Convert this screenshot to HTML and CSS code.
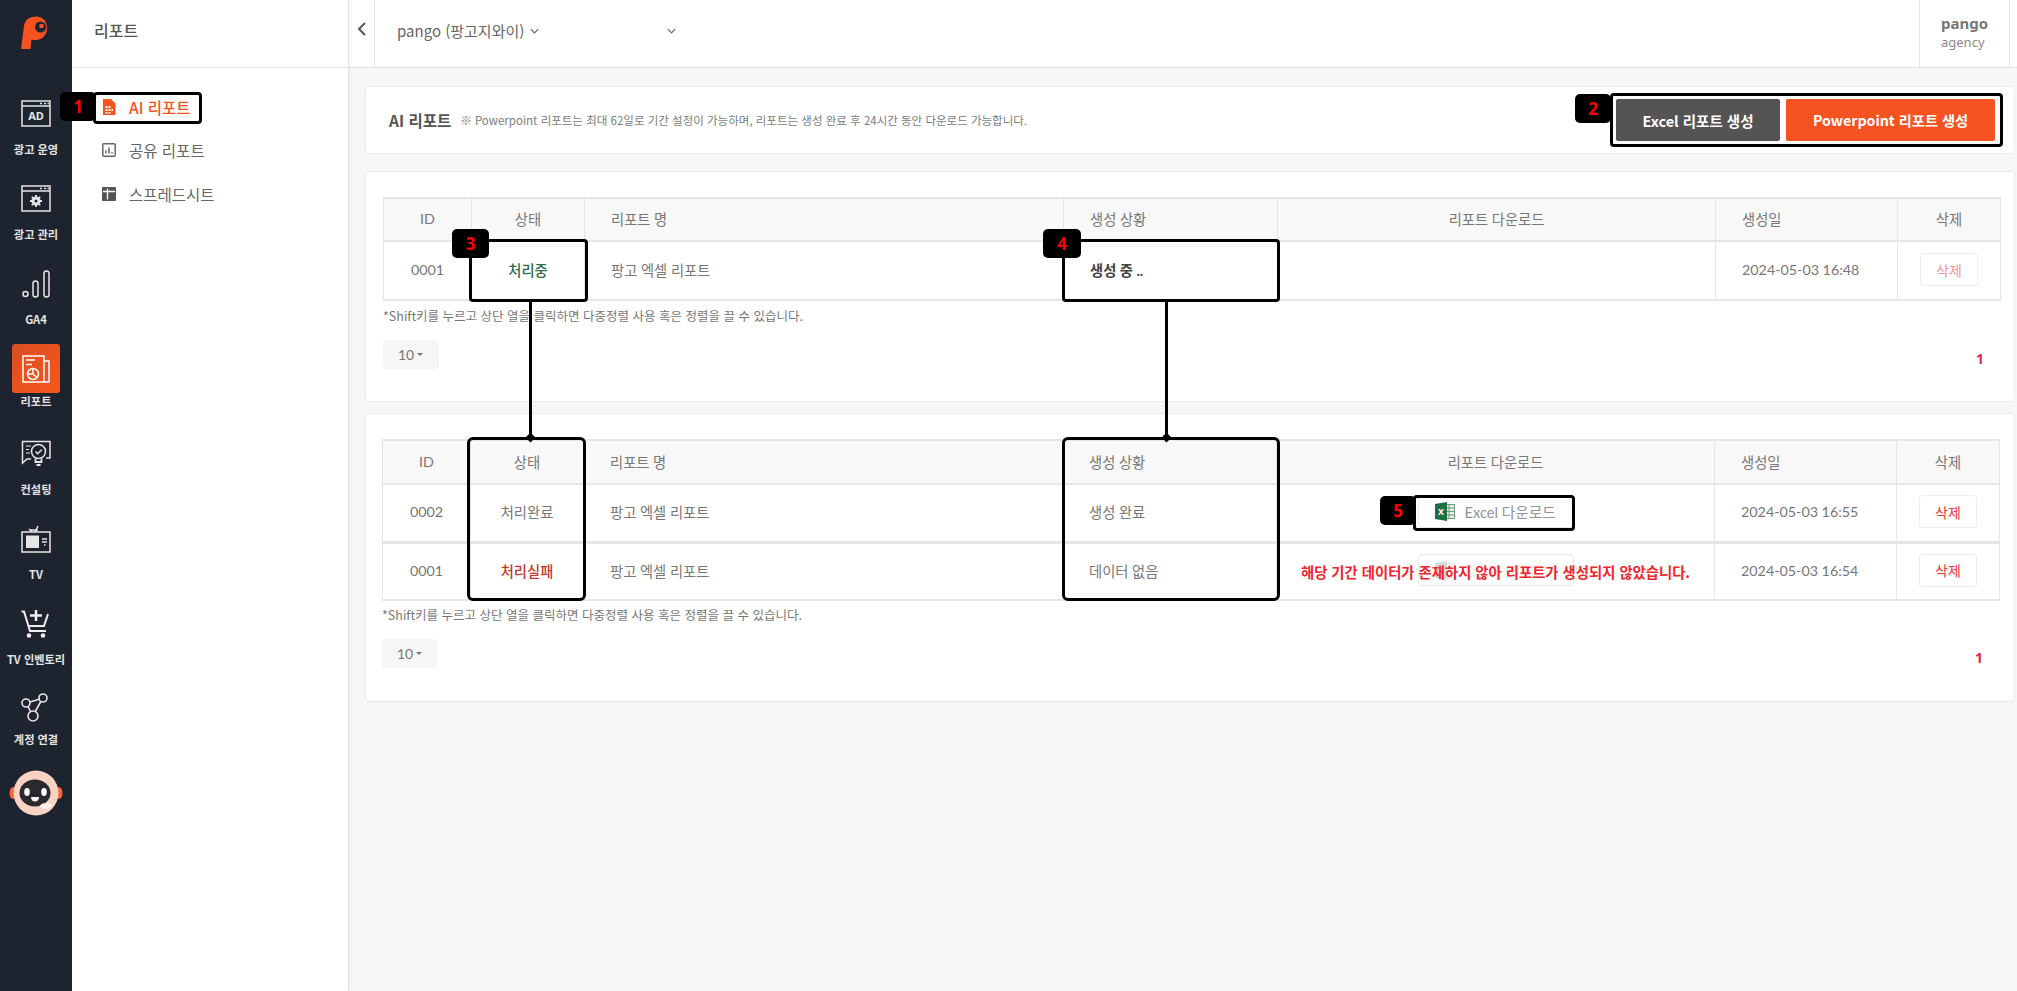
FILE: index.html
```html
<!DOCTYPE html>
<html lang="ko">
<head>
<meta charset="utf-8">
<title>AI 리포트</title>
<link rel="stylesheet" href="styles.css">
</head>
<body>
<div class="app">
  <nav class="rail">
    <svg class="logo" viewBox="0 0 30 36" width="30" height="36"><path fill="#f75321" d="M2 34 L5 11 C6 5 10 1.500 17 1.500 C24 1.500 28 6.500 28 13 C28 20 23 25 17 25 C15 25 13.500 24.800 12.500 24.400 L11.500 34 Z"/><circle cx="21.500" cy="12" r="5.500" fill="#1e2330"/><circle cx="22.500" cy="11" r="2.300" fill="#f75321"/></svg>
    <a class="rail-item"><span class="rail-icon"><svg viewBox="0 0 30 28" width="30" height="28" fill="none" stroke="#e6e6e6" stroke-width="1.500"><rect x="1" y="1" width="28" height="25"/><path d="M1 6h28M19 3.500h2M23 3.500h2M26.500 3.500h1.500"/><text x="15" y="20" class="svg-ad">AD</text></svg></span><span class="rail-label">광고 운영</span></a>
    <a class="rail-item"><span class="rail-icon"><svg viewBox="0 0 30 28" width="30" height="28" fill="none" stroke="#e6e6e6" stroke-width="1.500"><rect x="1" y="1" width="28" height="25"/><path d="M1 6h28M19 3.500h2M23 3.500h2M26.500 3.500h1.500"/><circle cx="15" cy="16" r="3" stroke-width="3"/><path stroke-width="1.800" d="M15 10v2M15 20v2M9 16h2M19 16h2M10.800 11.800l1.400 1.400M17.800 18.800l1.400 1.400M10.800 20.200l1.400-1.400M17.800 13.200l1.400-1.400"/></svg></span><span class="rail-label">광고 관리</span></a>
    <a class="rail-item"><span class="rail-icon"><svg viewBox="0 0 30 28" width="30" height="28" fill="none" stroke="#e6e6e6" stroke-width="1.500"><circle cx="4.500" cy="24" r="2.500"/><rect x="12" y="11" width="5" height="16" rx="2.500"/><rect x="23" y="1" width="5" height="26" rx="2.500"/></svg></span><span class="rail-label">GA4</span></a>
    <a class="rail-item rail-item-active"><span class="rail-active"><svg viewBox="0 0 28 28" width="28" height="28" fill="none" stroke="#fff" stroke-width="1.500"><path d="M1 1h21v26H1z"/><path d="M22 6h5v21h-5"/><path d="M4 5h9M4 9.500h6"/><circle cx="11" cy="19" r="5.500"/><path d="M11 19v-5.500M11 19l4 3.500M11 19H5.500"/></svg></span><span class="rail-label">리포트</span></a>
    <a class="rail-item"><span class="rail-icon"><svg viewBox="0 0 30 28" width="30" height="28" fill="none" stroke="#e6e6e6" stroke-width="1.500"><path d="M10 19H6L1.500 23V1.500H29V18h-4"/><circle cx="17.500" cy="11.500" r="7" fill="#1e2330"/><path d="M14.500 11.500l2.200 2.200 4-4"/><path d="M14.500 18.500v3.500h6v-3.500M15.500 25h4" stroke-width="1.800"/><path d="M5 6h5M5 9.500h3M5 13h4" stroke-width="1.200"/></svg></span><span class="rail-label">컨설팅</span></a>
    <a class="rail-item"><span class="rail-icon"><svg viewBox="0 0 30 28" width="30" height="28" fill="none" stroke="#e6e6e6" stroke-width="1.500"><rect x="1" y="7" width="28" height="20"/><path d="M11 7l-3-3M14 7l3-6M9 5h8"/><rect x="5" y="10.500" width="13" height="12.500" fill="#e6e6e6" stroke="none"/><path d="M21 14h5M21 17h5M23 20h1.500"/></svg></span><span class="rail-label">TV</span></a>
    <a class="rail-item"><span class="rail-icon"><svg viewBox="0 0 30 28" width="30" height="28" fill="none" stroke="#eee" stroke-width="2"><path d="M.5 1.500H3L9 21h16"/><path d="M27 4l-4 12H7"/><circle cx="8" cy="25.500" r="2.300" fill="#eee" stroke="none"/><circle cx="22" cy="25.500" r="2.300" fill="#eee" stroke="none"/><path d="M15 0v11M9 5.500h12" stroke-width="2.500"/></svg></span><span class="rail-label">TV 인벤토리</span></a>
    <a class="rail-item rail-item-link"><span class="rail-icon"><svg viewBox="0 0 30 30" width="30" height="30" fill="none" stroke="#e6e6e6" stroke-width="1.600"><circle cx="22" cy="5" r="4"/><circle cx="5" cy="10" r="4"/><circle cx="12" cy="23" r="5"/><path d="M9 9l9.200-2.800M7 13.500l2.500 5M19.800 8.500l-5.500 10"/></svg></span><span class="rail-label">계정 연결</span></a>
    <svg class="mascot" viewBox="0 0 56 48" width="56" height="48"><ellipse cx="5" cy="24" rx="3.500" ry="6" fill="#f7643a"/><ellipse cx="51" cy="24" rx="3.500" ry="6" fill="#f7643a"/><circle cx="28" cy="24" r="22.500" fill="#f8d3c3"/><ellipse cx="27" cy="24" rx="15.500" ry="13.500" fill="#2a2a2e"/><ellipse cx="19" cy="23" rx="2.800" ry="4" fill="#fff"/><ellipse cx="36" cy="23" rx="2.800" ry="4" fill="#fff"/><path d="M23 28h8c0 3-2 4.500-4 4.500S23 31 23 28z" fill="#fff"/><ellipse cx="38" cy="37" rx="6" ry="3" fill="#fff0ea"/></svg>
  </nav>

  <aside class="side">
    <div class="side-head">리포트</div>
    <ul class="side-menu">
      <li class="side-link side-link-on"><svg viewBox="0 0 14 16" width="14" height="16"><path fill="#f75321" d="M1 0h8l4.500 4.500V16H1z"/><path fill="#fff" d="M3.500 7h2v2h-2zM6.500 7h2v2h-2zM3.500 10h2v2h-2zM6.500 10h2v2h-2zM9.500 10h1.500v2H9.500zM3.500 13h2v1.500h-2zM6.500 13h2v1.500h-2z"/></svg>AI 리포트</li>
      <li class="side-link"><svg viewBox="0 0 14 14" width="14" height="14" fill="none" stroke="#666" stroke-width="1.500"><rect x=".8" y=".8" width="12.400" height="12.400" rx="1"/><path d="M4 10.500V7.500M7 10.500V4.500M10 10.500V9"/></svg>공유 리포트</li>
      <li class="side-link"><svg viewBox="0 0 14 14" width="14" height="14"><rect width="14" height="14" rx="1" fill="#555"/><path d="M1 4.500h12M5.500 1.500v11" stroke="#fff" stroke-width="1.300"/></svg>스프레드시트</li>
    </ul>
  </aside>

  <div class="main">
    <header class="top">
      <button class="back"><svg viewBox="0 0 10 14" width="10" height="14" fill="none" stroke="#555" stroke-width="2"><path d="M8 1L2 7l6 6"/></svg></button>
      <div class="crumb">pango (팡고지와이)<svg class="chev" viewBox="0 0 10 6" width="9" height="6" fill="none" stroke="#666" stroke-width="1.300"><path d="M1 1l4 4 4-4"/></svg><svg class="chev chev-far" viewBox="0 0 10 6" width="9" height="6" fill="none" stroke="#666" stroke-width="1.300"><path d="M1 1l4 4 4-4"/></svg></div>
      <div class="account"><strong>pango</strong><span>agency</span></div>
    </header>

    <section class="card card-title">
      <h1>AI 리포트</h1>
      <p>※ Powerpoint 리포트는 최대 62일로 기간 설정이 가능하며, 리포트는 생성 완료 후 24시간 동안 다운로드 가능합니다.</p>
      <div class="actions">
        <button class="btn btn-dark">Excel 리포트 생성</button>
        <button class="btn btn-orange">Powerpoint 리포트 생성</button>
      </div>
    </section>

    <section class="card card-list">
      <table class="grid">
        <colgroup><col class="c-id"><col class="c-state"><col class="c-name"><col class="c-prog"><col class="c-down"><col class="c-date"><col class="c-del"></colgroup>
        <thead><tr><th>ID</th><th>상태</th><th class="left">리포트 명</th><th class="left">생성 상황</th><th>리포트 다운로드</th><th class="left">생성일</th><th>삭제</th></tr></thead>
        <tbody>
          <tr><td>0001</td><td class="st-run">처리중</td><td class="left">팡고 엑셀 리포트</td><td class="left strong">생성 중 ..</td><td></td><td class="left">2024-05-03 16:48</td><td><button class="del del-soft">삭제</button></td></tr>
        </tbody>
      </table>
      <p class="note">*Shift키를 누르고 상단 열을 클릭하면 다중정렬 사용 혹은 정렬을 끌 수 있습니다.</p>
      <div class="foot"><span class="size">10<i class="caret"></i></span><span class="pg">1</span></div>
    </section>

    <section class="card card-list card-list-b">
      <table class="grid grid-b">
        <colgroup><col class="c-id"><col class="c-state"><col class="c-name"><col class="c-prog"><col class="c-down"><col class="c-date"><col class="c-del"></colgroup>
        <thead><tr><th>ID</th><th>상태</th><th class="left">리포트 명</th><th class="left">생성 상황</th><th>리포트 다운로드</th><th class="left">생성일</th><th>삭제</th></tr></thead>
        <tbody>
          <tr class="row-first"><td>0002</td><td>처리완료</td><td class="left">팡고 엑셀 리포트</td><td class="left">생성 완료</td><td><button class="xls"><svg viewBox="0 0 20 19" width="20" height="19"><path fill="#e9efe9" stroke="#6a9b7c" d="M10 2.500h9.500v14H10z"/><path stroke="#6a9b7c" d="M14 2.500v14M10 6h9.500M10 9.500h9.500M10 13h9.500"/><path fill="#1d7044" d="M0 2l12-2v19L0 17z"/><text x="6" y="12.500" class="svg-x">X</text></svg>Excel 다운로드</button></td><td class="left">2024-05-03 16:55</td><td><button class="del">삭제</button></td></tr>
          <tr class="row-low"><td>0001</td><td class="st-fail">처리실패</td><td class="left">팡고 엑셀 리포트</td><td class="left">데이터 없음</td><td class="msg-cell"><button class="xls xls-off"><svg viewBox="0 0 20 19" width="20" height="19"><path fill="#e9efe9" stroke="#6a9b7c" d="M10 2.500h9.500v14H10z"/><path fill="#1d7044" d="M0 2l12-2v19L0 17z"/></svg>Excel 다운로드</button><span class="msg">해당 기간 데이터가 존재하지 않아 리포트가 생성되지 않았습니다.</span></td><td class="left">2024-05-03 16:54</td><td><button class="del">삭제</button></td></tr>
        </tbody>
      </table>
      <p class="note">*Shift키를 누르고 상단 열을 클릭하면 다중정렬 사용 혹은 정렬을 끌 수 있습니다.</p>
      <div class="foot"><span class="size">10<i class="caret"></i></span><span class="pg">1</span></div>
    </section>
  </div>

  <div class="marks">
    <i class="box b1"></i><b class="tag t1">1</b>
    <i class="box b2"></i><b class="tag t2">2</b>
    <i class="box b3"></i><b class="tag t3">3</b>
    <i class="box b4"></i><b class="tag t4">4</b>
    <i class="box b3l"></i><i class="box b4l"></i>
    <i class="box b5"></i><b class="tag t5">5</b>
    <i class="wire w3"></i><i class="wire w4"></i>
    <i class="dia d3"></i><i class="dia d4"></i>
  </div>
</div>
</body>
</html>
```

FILE: styles.css
```css
* { box-sizing: border-box; }
html, body { margin: 0; height: 100%; }
body { font-family: "Noto Sans CJK KR", "Noto Sans", sans-serif; color: #666; background: #f7f7f9; overflow: hidden; }
.app { position: relative; display: flex; width: 2017px; height: 991px; }

.rail { width: 72px; flex: none; background: #1e2330; display: flex; flex-direction: column; align-items: center; padding-top: 15px; }
.logo { margin-left: -4px; margin-bottom: 49px; display: block; }
.rail-item { display: flex; flex-direction: column; align-items: center; height: 85px; width: 72px; flex: none; }
.rail-icon { height: 28px; display: flex; align-items: flex-start; }
.rail-label { margin-top: 13px; font-size: 11.200px; line-height: 17px; font-weight: 700; color: #e4e4e4; white-space: nowrap; }
.rail-item-active { margin-top: -11px; height: 96px; }
.rail-active { width: 48px; height: 49px; flex: none; border-radius: 3px; background: linear-gradient(135deg, #d94e20, #f9561d); display: flex; align-items: center; justify-content: center; }
.rail-item-active .rail-label { margin-top: 0; }
.rail-item-link { margin-top: -2px; height: 84px; }
.rail-item-link .rail-label { margin-top: 10px; }
.mascot { margin-top: -8px; }

.side { width: 277px; flex: none; background: #fff; border-right: 1px solid #e4e4e8; box-shadow: 1px 0 3px rgba(0,0,0,.05); position: relative; }
.side-head { height: 68px; padding-left: 22px; border-bottom: 1px solid #e2e2e6; font-size: 16px; font-weight: 500; line-height: 61px; color: #555; }
.side-menu { list-style: none; margin: 0; padding: 17px 0 0 30px; }
.side-link { height: 43.500px; display: flex; align-items: center; gap: 13px; font-size: 15.500px; color: #666; }
.side-link svg { flex: none; }
.side-link-on { color: #f75321; font-weight: 500; }

.main { flex: 1; min-width: 0; padding-right: 2px; }
.top { height: 68px; margin-right: -2px; background: #fff; border-bottom: 1px solid #e2e2e6; display: flex; align-items: stretch; }
.back { width: 26px; padding: 0 0 6px; border: 0; border-right: 1px solid #e6e6ea; background: #fff; }
.crumb { flex: 1; display: flex; align-items: center; padding: 0 0 6px 22px; font-size: 15px; color: #666; }
.chev { margin-left: 6px; }
.chev-far { margin-left: 128px; }
.account { width: 91px; margin-right: 7px; border-left: 1px solid #e6e6ea; border-right: 1px solid #e6e6ea; padding: 14px 0 0 21px; display: flex; flex-direction: column; line-height: 19px; }
.account strong { font-family: "Noto Sans", sans-serif; font-size: 15px; color: #777; }
.account span { font-family: "Noto Sans", sans-serif; font-size: 13px; color: #888; }

.card { background: #fff; border: 1px solid #e8e8ee; border-radius: 3px; margin-left: 16px; }
.card-title { margin-top: 18px; height: 68px; display: flex; align-items: center; padding-left: 23px; padding-right: 19px; }
.card-title h1 { margin: 0 9px 0 0; font-size: 15.500px; font-weight: 700; color: #555; }
.card-title p { margin: 0; flex: 1; font-size: 11.500px; color: #7c7c7c; }
.actions { display: flex; gap: 6px; }
.btn { height: 42px; border: 0; border-radius: 2px; color: #fff; font: 700 14.500px "Noto Sans CJK KR", "Noto Sans", sans-serif; }
.btn-dark { width: 164px; background: #555353; }
.btn-orange { width: 209px; background: #f75321; font-size: 14.200px; }

.card-list { margin-top: 17px; height: 231px; padding: 25px 15px 0 17px; }
.card-list-b { margin-top: 11px; height: 289px; padding: 25px 15px 0 16px; }

.grid { width: 1617px; table-layout: fixed; border-collapse: collapse; font-family: Lato, "Noto Sans CJK KR", sans-serif; font-size: 14.300px; color: #777; }
.c-id { width: 88px; } .c-state { width: 113px; } .c-name { width: 479px; } .c-prog { width: 214px; } .c-down { width: 438px; } .c-date { width: 182px; } .c-del { width: 103px; }
.grid th, .grid td { border: 1px solid #e6e6e6; text-align: center; padding: 0 0 2px; }
.grid th { height: 43px; background: #f8f8f8; font-weight: 400; border-bottom-width: 2px; border-top-width: 2px; }
.grid td { height: 59px; }
.grid-b th { height: 44px; }
.grid-b .row-first td { height: 58px; }
.grid-b .row-low td { height: 58px; }
.grid tr:last-child td { border-bottom-width: 2px; }
.grid-b tr:first-child td { border-bottom-width: 3px; }
.grid .left { text-align: left; padding-left: 26px; }
.strong { font-weight: 700; color: #444; }
.st-run { color: #2f6b45; font-weight: 500; }
.st-fail { color: #c0392b; font-weight: 500; }

.del { width: 58px; height: 33px; background: #fff; border: 1px solid #eee; border-radius: 3px; color: #e53935; font: 14px "Noto Sans CJK KR", sans-serif; padding: 0; vertical-align: middle; }
.del-soft { color: #f7939a; }
.xls { width: 156px; height: 32px; padding: 0 0 0 16px; background: #fff; border: 1px solid #eaeaea; border-radius: 3px; display: inline-flex; align-items: center; gap: 10px; color: #8f949c; font: 14.700px Lato, "Noto Sans CJK KR", sans-serif; vertical-align: middle; }
.xls-off { color: #f4f4f4; }
.xls-off svg { opacity: .2; }
.msg-cell { position: relative; }
.msg { position: absolute; left: 0; right: 0; top: 50%; transform: translateY(-50%); text-align: center; color: #f0242c; font: 700 14.350px "Noto Sans CJK KR", sans-serif; white-space: nowrap; }

.note { margin: 6px 0 15px; font-size: 12.500px; line-height: 18px; color: #777; }
.grid-b + .note { margin-top: 5px; }
.foot { display: flex; justify-content: space-between; align-items: center; width: 1617px; }
.size { width: 56px; height: 29px; border-radius: 3px; background: #f6f6f6; font: 14px Lato, sans-serif; color: #777; display: flex; align-items: center; padding-left: 15px; gap: 3px; }
.caret { width: 0; height: 0; border: 3px solid transparent; border-top-color: #777; border-bottom: 0; }
.pg { margin: 8px 16px 0 0; font: 700 14px "Noto Sans", sans-serif; color: #e0244b; }

.marks i, .marks b { position: absolute; display: block; }
.box { border: 3px solid #000; border-radius: 4px; }
.tag { background: #000; border-radius: 5px; color: #f00; font: 700 17px/29px "Noto Sans", sans-serif; text-align: center; }
.b1 { left: 93px; top: 92px; width: 109px; height: 32px; }
.t1 { left: 60px; top: 92px; width: 36px; height: 29px; }
.b2 { left: 1610px; top: 93px; width: 393px; height: 54px; }
.t2 { left: 1575px; top: 94px; width: 36px; height: 29px; }
.b3 { left: 469px; top: 239px; width: 119px; height: 63px; }
.t3 { left: 452px; top: 229px; width: 37px; height: 29px; }
.b4 { left: 1062px; top: 239px; width: 218px; height: 63px; }
.t4 { left: 1043px; top: 229px; width: 38px; height: 29px; }
.b3l { left: 467px; top: 437px; width: 119px; height: 164px; border-radius: 6px; }
.b4l { left: 1062px; top: 437px; width: 218px; height: 164px; border-radius: 6px; }
.b5 { left: 1413px; top: 495px; width: 162px; height: 36px; }
.t5 { left: 1380px; top: 496px; width: 36px; height: 29px; }
.wire { width: 3px; background: #000; top: 302px; height: 135px; }
.w3 { left: 529px; }
.w4 { left: 1165px; }
.dia { width: 7px; height: 7px; background: #000; transform: rotate(45deg); top: 434px; }
.d3 { left: 527px; }
.d4 { left: 1163px; }

.svg-ad { font: 700 11px "Noto Sans", sans-serif; fill: #e6e6e6; stroke: none; text-anchor: middle; }
.svg-x { font: 700 9px "Noto Sans", sans-serif; fill: #fff; text-anchor: middle; }
```
